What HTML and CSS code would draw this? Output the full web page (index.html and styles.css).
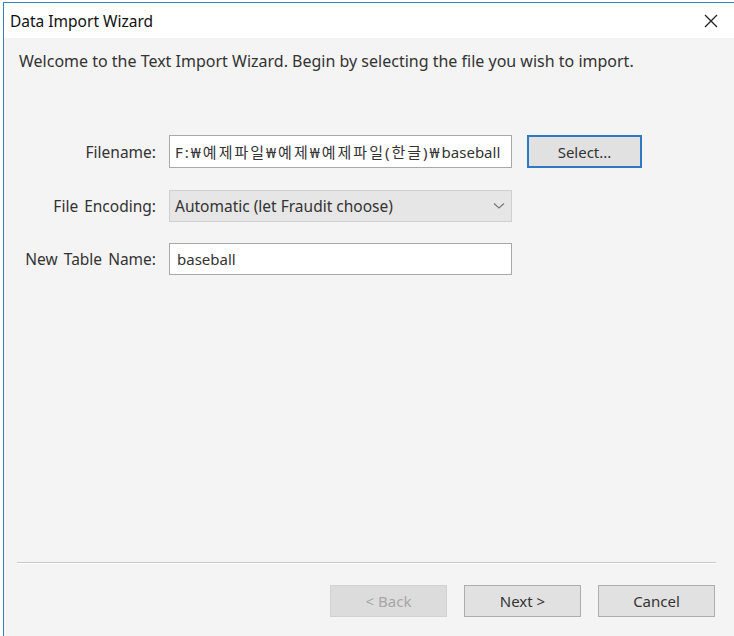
FILE: index.html
```html
<!DOCTYPE html>
<html>
<head>
  <meta charset="utf-8">
  <title>Data Import Wizard</title>
  <link rel="stylesheet" href="styles.css">
</head>
<body>
  <div class="window">
    <div class="titlebar">
      <span class="title">Data Import Wizard</span>
      <span class="close">
        <svg width="14" height="14" viewBox="0 0 14 14"><path d="M1 1L13 13M13 1L1 13" stroke="#222" stroke-width="1.3" fill="none"/></svg>
      </span>
    </div>

    <div class="content">
      <p class="welcome">Welcome to the Text Import Wizard. Begin by selecting the file you wish to import.</p>

      <div class="form">
        <label class="label" for="filename">Filename:</label>
        <div class="field path"><span class="ko">F:₩예제파일₩예제₩예제파일(한글)₩</span>baseball</div>
        <button class="btn btn-focus">Select...</button>

        <label class="label">File Encoding:</label>
        <div class="field combo">
          <span>Automatic (let Fraudit choose)</span>
          <svg width="12" height="8" viewBox="0 0 12 8"><path d="M1 1.5L6 6L11 1.5" stroke="#777" stroke-width="1.2" fill="none"/></svg>
        </div>
        <span></span>

        <label class="label">New Table Name:</label>
        <div class="field">baseball</div>
        <span></span>
      </div>

      <div class="footer">
        <div class="separator"></div>
        <div class="buttons">
          <button class="btn btn-disabled">&lt; Back</button>
          <button class="btn">Next &gt;</button>
          <button class="btn">Cancel</button>
        </div>
      </div>
    </div>
  </div>
</body>
</html>
```

FILE: styles.css
```css
* {
  margin: 0;
  padding: 0;
  box-sizing: border-box;
}

body {
  background: #ffffff;
  font-family: "Noto Sans", "Noto Sans CJK KR", sans-serif;
  font-size: 15px;
  color: #222;
  overflow: hidden;
}

.window {
  margin: 2px 0 0 3px;
  height: 634px;
  border-top: 1px solid #3d80b6;
  border-left: 1px solid #3d80b6;
  display: flex;
  flex-direction: column;
}

.titlebar {
  height: 35px;
  background: #ffffff;
  display: flex;
  align-items: center;
  justify-content: space-between;
  padding: 0 16px 0 6px;
}

.title {
  font-size: 15.5px;
  color: #111;
}

.close {
  display: flex;
}

.content {
  flex: 1;
  background: #f4f4f4;
  padding: 12px 18px 0 13px;
  display: flex;
  flex-direction: column;
}

.welcome {
  padding-left: 2px;
  font-size: 16px;
  line-height: 22px;
  color: #333;
}

.form {
  margin-top: 63px;
  display: grid;
  grid-template-columns: 139px 343px 117px;
  grid-template-rows: 34px 32px 32px;
  column-gap: 13px;
  row-gap: 21px;
  align-items: start;
}

.label {
  align-self: center;
  text-align: right;
  font-size: 15.5px;
  word-spacing: 2px;
  color: #333;
}

.field {
  height: 32px;
  border: 1px solid #a9a9a9;
  background: #ffffff;
  display: flex;
  align-items: center;
  padding: 0 7px;
  white-space: nowrap;
  overflow: hidden;
  color: #333;
}

.path {
  height: 33px;
  padding: 0 5px;
}

.path .ko {
  letter-spacing: 2px;
}

.combo {
  background: #e6e6e6;
  border-color: #cfcfcf;
  justify-content: space-between;
  padding: 0 6px 0 5px;
  font-size: 15.5px;
}

.btn {
  height: 33px;
  font-family: inherit;
  font-size: 15px;
  color: #333;
  background: #e1e1e1;
  border: 1px solid #adadad;
}

.btn-focus {
  margin-left: 2px;
  border: 2px solid #2f79c4;
}

.btn-disabled {
  color: #a6a6a6;
  background: #dcdcdc;
  border-color: #d2d2d2;
}

.footer {
  margin-top: auto;
  padding-bottom: 19px;
}

.separator {
  height: 2px;
  border-top: 1px solid #c9c9c9;
  border-bottom: 1px solid #ffffff;
}

.buttons {
  margin-top: 21px;
  display: flex;
  justify-content: flex-end;
  gap: 17px;
  padding-right: 1px;
}

.buttons .btn {
  width: 117px;
  height: 32px;
}
```
